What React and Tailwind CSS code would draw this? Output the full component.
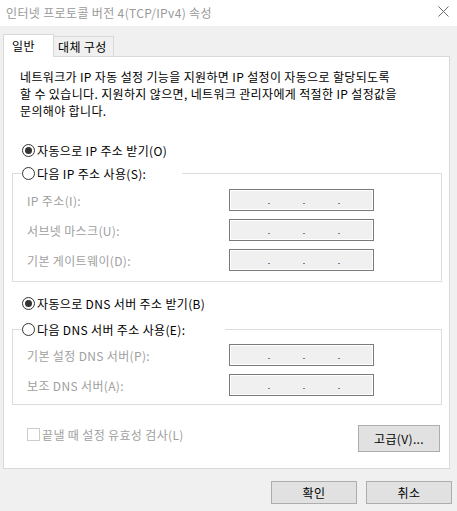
import React from 'react';

const font = { fontFamily: '"Noto Sans CJK KR", "Noto Sans", sans-serif' };

function Radio({ checked }) {
  return (
    <span className="w-[13px] h-[13px] rounded-full border border-[#333333] bg-white flex items-center justify-center shrink-0">
      {checked && <span className="w-[7px] h-[7px] rounded-full bg-[#333333]" />}
    </span>
  );
}

function IpBox() {
  return (
    <div className="w-[145px] h-[22px] border border-[#7a7a7a] bg-[#f0f0f0] shadow-[inset_0_0_0_1px_#ffffff] flex items-start pt-[13px] pl-[38px] gap-[33px]">
      <span className="w-[2px] h-[1px] bg-[#7a7aa8]" />
      <span className="w-[2px] h-[1px] bg-[#7a7aa8]" />
      <span className="w-[2px] h-[1px] bg-[#7a7aa8]" />
    </div>
  );
}

function Field({ label }) {
  return (
    <div className="flex items-center h-[22px]">
      <span className="w-[202px] text-[#a0a0a0]">{label}</span>
      <IpBox />
    </div>
  );
}

function Group({ legend, legendWidth, fields, top, bottom }) {
  return (
    <div className={`relative ml-[8px] w-[430px] border border-[#dcdcdc] ${top} ${bottom} pl-[14px] flex flex-col gap-[8px]`}>
      <div className={`absolute left-[9px] top-[-11px] h-[20px] flex items-center gap-[2px] bg-white ${legendWidth}`}>
        <Radio />
        <span className="whitespace-nowrap">{legend}</span>
      </div>
      {fields.map((f) => (
        <Field key={f} label={f} />
      ))}
    </div>
  );
}

export default function App() {
  return (
    <div style={font} className="w-[457px] h-[511px] bg-[#f0f0f0] overflow-hidden text-[12px] leading-[17px] tracking-[0.35px] text-black">
      {/* Title bar */}
      <div className="h-[26px] bg-white flex items-center justify-between pl-[6px] pr-[8px]">
        <span className="text-[#9a9a9a] -mt-[2px]">인터넷 프로토콜 버전 4(TCP/IPv4) 속성</span>
        <svg width="11" height="11" viewBox="0 0 11 11" className="-mt-[4px]">
          <path d="M0.5 0.5 L10.5 10.5 M10.5 0.5 L0.5 10.5" stroke="#6b6b6b" strokeWidth="1" />
        </svg>
      </div>

      {/* Tabs */}
      <div className="h-[30px] flex items-end pl-[3px]">
        <div className="relative z-10 w-[51px] h-[23px] -mb-[1px] bg-white border border-b-0 border-[#d9d9d9] pl-[8px] pt-[2px]">
          일반
        </div>
        <div className="w-[60px] h-[20px] border border-l-0 border-b-0 border-[#d9d9d9] bg-[#f0f0f0] pl-[4px] pt-[1px] whitespace-nowrap">
          대체 구성
        </div>
      </div>

      {/* Panel */}
      <div className="ml-[3px] w-[447px] h-[413px] border border-[#d9d9d9] bg-white flex flex-col">
        <p className="pt-[11px] pl-[16px] whitespace-nowrap">
          네트워크가 IP 자동 설정 기능을 지원하면 IP 설정이 자동으로 할당되도록
          <br />
          할 수 있습니다. 지원하지 않으면, 네트워크 관리자에게 적절한 IP 설정값을
          <br />
          문의해야 합니다.
        </p>

        <div className="mt-[21px] ml-[18px] h-[20px] flex items-center gap-[2px]">
          <Radio checked />
          <span>자동으로 IP 주소 받기(O)</span>
        </div>

        <div className="mt-[13px]">
          <Group
            legend="다음 IP 주소 사용(S):"
            legendWidth="w-[160px]"
            fields={['IP 주소(I):', '서브넷 마스크(U):', '기본 게이트웨이(D):']}
            top="pt-[15px]"
            bottom="pb-[10px]"
          />
        </div>

        <div className="mt-[11px] ml-[18px] h-[20px] flex items-center gap-[2px]">
          <Radio checked />
          <span>자동으로 DNS 서버 주소 받기(B)</span>
        </div>

        <div className="mt-[16px]">
          <Group
            legend="다음 DNS 서버 주소 사용(E):"
            legendWidth="w-[203px]"
            fields={['기본 설정 DNS 서버(P):', '보조 DNS 서버(A):']}
            top="pt-[14px]"
            bottom="pb-[8px]"
          />
        </div>

        <div className="mt-[20px] flex items-start justify-between pl-[23px] pr-[9px]">
          <div className="flex items-center gap-[2px] mt-[1px] text-[#a0a0a0]">
            <span className="w-[13px] h-[13px] border border-[#cccccc] bg-white shrink-0" />
            <span>끝낼 때 설정 유효성 검사(L)</span>
          </div>
          <button className="w-[82px] h-[27px] border border-[#adadad] bg-[#e1e1e1]">고급(V)...</button>
        </div>
      </div>

      {/* Dialog buttons */}
      <div className="mt-[12px] flex justify-end gap-[9px] pr-[5px]">
        <button className="w-[86px] h-[23px] border border-[#adadad] bg-[#e1e1e1]">확인</button>
        <button className="w-[86px] h-[23px] border border-[#adadad] bg-[#e1e1e1]">취소</button>
      </div>
    </div>
  );
}
